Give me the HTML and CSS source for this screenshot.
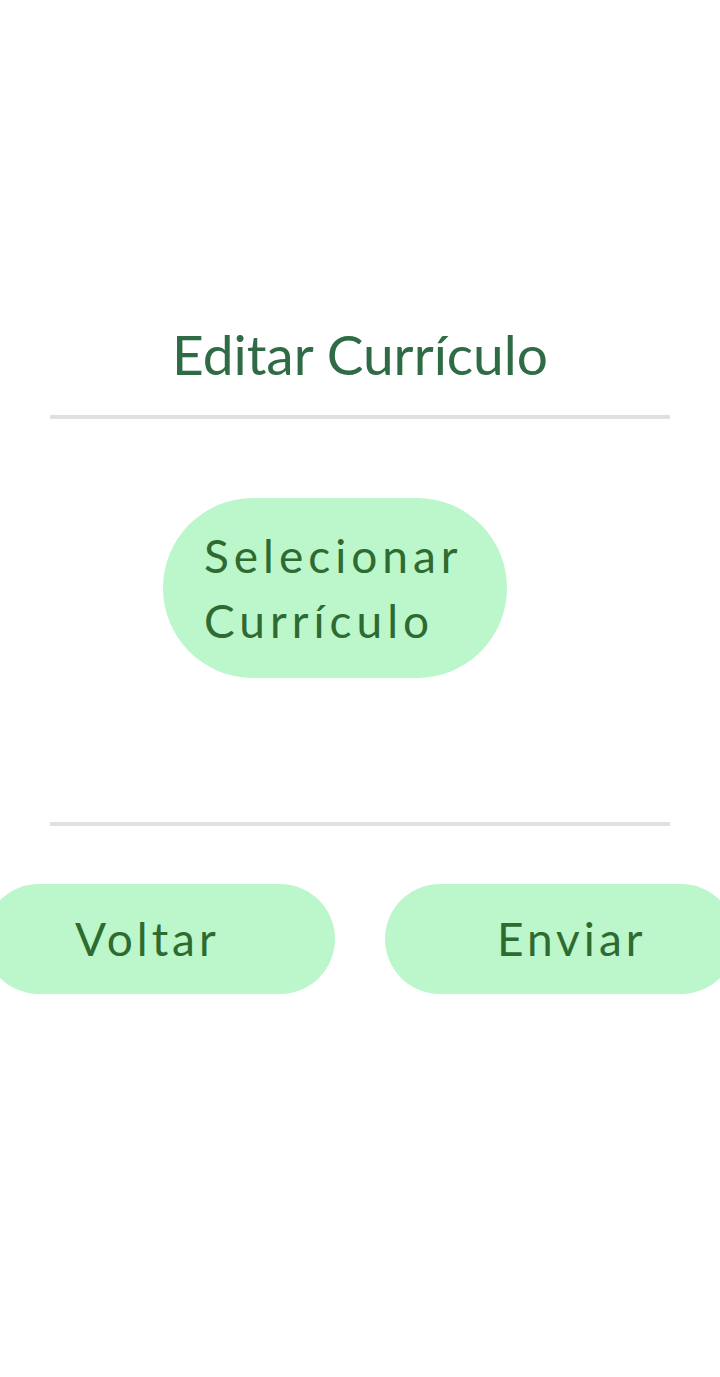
FILE: index.html
```html
<!DOCTYPE html>
<html lang="pt">
<head>
<meta charset="utf-8">
<title>Editar Currículo</title>
<link rel="stylesheet" href="styles.css">
</head>
<body>
<main class="screen">
  <h1 class="title">Editar Currículo</h1>
  <hr class="divider">
  <div class="select-row">
    <button class="pill select-btn" type="button"><span>Selecionar</span><span>Currículo</span></button>
  </div>
  <hr class="divider divider-bottom">
  <div class="actions">
    <button class="pill action-btn back-btn" type="button">Voltar</button>
    <button class="pill action-btn send-btn" type="button">Enviar</button>
  </div>
</main>
</body>
</html>
```

FILE: styles.css
```css
html, body {
  margin: 0;
  padding: 0;
  background: #ffffff;
}

body {
  font-family: Lato, "Open Sans", "Noto Sans", sans-serif;
  overflow: hidden;
}

.screen {
  width: 720px;
  height: 1377px;
  display: flex;
  flex-direction: column;
  padding-top: 324px;
  box-sizing: border-box;
}

.title {
  margin: 0;
  font-weight: 400;
  font-size: 55px;
  line-height: 60px;
  text-align: center;
  color: #2f6b45;
}

.divider {
  margin: 31px 50px 0;
  height: 4px;
  border: 0;
  background: #e0e0e0;
}

.divider-bottom {
  margin-top: 144px;
}

.select-row {
  display: flex;
  padding-left: 163px;
  margin-top: 79px;
}

.pill {
  border: 0;
  background: #bcf6cb;
  color: #2e6b30;
  font-family: inherit;
  font-weight: 400;
  font-size: 46px;
  letter-spacing: 5px;
  cursor: pointer;
  box-sizing: border-box;
  padding: 0;
  text-align: left;
}

.select-btn {
  width: 344px;
  height: 180px;
  border-radius: 90px;
  display: flex;
  flex-direction: column;
  justify-content: center;
  align-items: flex-start;
  padding-left: 41px;
  line-height: 65px;
}

.actions {
  display: flex;
  justify-content: center;
  gap: 50px;
  margin-top: 58px;
}

.action-btn {
  flex: 0 0 351px;
  height: 110px;
  border-radius: 55px;
  line-height: 110px;
  letter-spacing: 4px;
}

.back-btn {
  padding-left: 91px;
}

.send-btn {
  padding-left: 112px;
}
```
